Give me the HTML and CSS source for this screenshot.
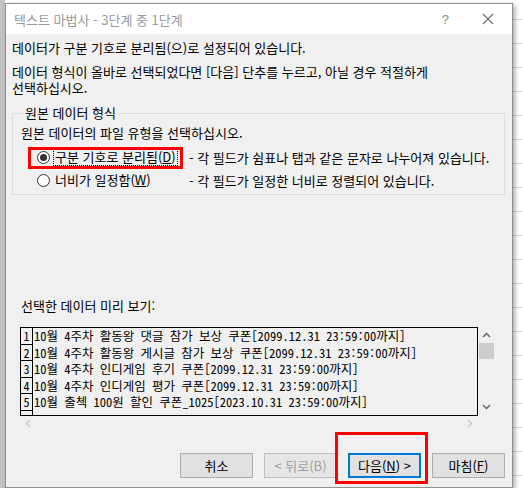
FILE: index.html
```html
<!DOCTYPE html>
<html lang="ko">
<head>
  <meta charset="UTF-8">
  <title>텍스트 마법사 - 3단계 중 1단계</title>
  <link rel="stylesheet" href="styles.css">
</head>
<body>

  <div class="wizard">
    <div class="titlebar">
      <span class="title">텍스트 마법사 - 3단계 중 1단계</span>
      <span class="help">?</span>
      <svg class="close" width="12" height="12" viewBox="0 0 12 12">
        <path d="M1 1 L11 11 M11 1 L1 11" stroke="#707070" stroke-width="1.1" fill="none"/>
      </svg>
    </div>

    <div class="content">
      <p class="intro">데이터가 구분 기호로 분리됨(으)로 설정되어 있습니다.</p>
      <p class="intro">데이터 형식이 올바로 선택되었다면 [다음] 단추를 누르고, 아닐 경우 적절하게<br>선택하십시오.</p>

      <fieldset class="group">
        <legend>원본 데이터 형식</legend>
        <div class="hint">원본 데이터의 파일 유형을 선택하십시오.</div>

        <div class="option">
          <div class="opt-main">
            <span class="radio checked"></span>
            <span class="opt-label focus">구분 기호로 분리됨(<u>D</u>)</span>
          </div>
          <span class="opt-desc">- 각 필드가 쉼표나 탭과 같은 문자로 나누어져 있습니다.</span>
          <span class="mark mark-option"></span>
        </div>

        <div class="option">
          <div class="opt-main">
            <span class="radio"></span>
            <span class="opt-label">너비가 일정함(<u>W</u>)</span>
          </div>
          <span class="opt-desc">- 각 필드가 일정한 너비로 정렬되어 있습니다.</span>
        </div>
      </fieldset>

      <div class="preview-label">선택한 데이터 미리 보기:</div>

      <div class="preview">
        <div class="sheet">
          <div class="row"><span class="num">1</span><span class="cell">10월 4주차 활동왕 댓글 참가 보상 쿠폰[2099.12.31 23:59:00까지]</span></div>
          <div class="row"><span class="num">2</span><span class="cell">10월 4주차 활동왕 게시글 참가 보상 쿠폰[2099.12.31 23:59:00까지]</span></div>
          <div class="row"><span class="num">3</span><span class="cell">10월 4주차 인디게임 후기 쿠폰[2099.12.31 23:59:00까지]</span></div>
          <div class="row"><span class="num">4</span><span class="cell">10월 4주차 인디게임 평가 쿠폰[2099.12.31 23:59:00까지]</span></div>
          <div class="row"><span class="num">5</span><span class="cell">10월 출첵 100원 할인 쿠폰_1025[2023.10.31 23:59:00까지]</span></div>
          <div class="row"><span class="num"></span><span class="cell"></span></div>
        </div>
        <div class="vscroll">
          <svg class="arrow" width="9" height="6" viewBox="0 0 9 6"><path d="M1 5 L4.5 1.5 L8 5" stroke="#606060" stroke-width="1.4" fill="none"/></svg>
          <div class="thumb"></div>
          <svg class="arrow arrow-down" width="9" height="6" viewBox="0 0 9 6"><path d="M1 1 L4.5 4.5 L8 1" stroke="#606060" stroke-width="1.4" fill="none"/></svg>
        </div>
      </div>

      <div class="hscroll">
        <svg width="6" height="9" viewBox="0 0 6 9"><path d="M5 1 L1.5 4.5 L5 8" stroke="#c8c8c8" stroke-width="1.4" fill="none"/></svg>
        <svg width="6" height="9" viewBox="0 0 6 9"><path d="M1 1 L4.5 4.5 L1 8" stroke="#c8c8c8" stroke-width="1.4" fill="none"/></svg>
      </div>

      <div class="buttons">
        <button class="btn">취소</button>
        <button class="btn" disabled>&lt; 뒤로(B)</button>
        <button class="btn btn-default">다음(<u>N</u>) &gt;<span class="mark mark-next"></span></button>
        <button class="btn">마침(<u>F</u>)</button>
      </div>
    </div>
  </div>

</body>
</html>
```

FILE: styles.css
```css
body {
  margin: 0;
  width: 522px;
  height: 488px;
  overflow: hidden;
  font-family: "Noto Sans CJK KR", "Noto Sans", sans-serif;
  font-size: 13px;
  color: #000;
  background:
    linear-gradient(to right, #c4c4c4 0, #c4c4c4 5px, transparent 5px),
    repeating-linear-gradient(to bottom, transparent 0, transparent 19px, #dadada 19px, #dadada 20px, transparent 20px, transparent 24px),
    #fff;
  padding: 3px 0 0 5px;
  box-sizing: border-box;
}

.wizard {
  width: 506px;
  border: 1px solid #8f8f8f;
  background: #f0f0f0;
  box-shadow: 2px 2px 5px rgba(0, 0, 0, 0.35);
}

.titlebar {
  display: flex;
  align-items: center;
  height: 30px;
  background: #fff;
  padding-left: 8px;
}

.title {
  flex: 1;
  color: #9a9a9a;
}

.help {
  color: #8a8a8a;
  font-family: "Liberation Sans", sans-serif;
  font-size: 13px;
  margin-right: 33px;
}

.close {
  margin-right: 18px;
}

.content {
  padding: 6px 7px 9px 6px;
}

.intro {
  margin: 0 0 8px;
  line-height: 16px;
}

.group {
  margin: 9px 0 0;
  padding: 4px 8px 2px 8px;
  border: 1px solid #dcdcdc;
  min-inline-size: 0;
}

.group legend {
  padding: 0 2px;
  margin-left: 2px;
  line-height: 16px;
}

.hint {
  line-height: 16px;
  margin-bottom: 5px;
}

.option {
  position: relative;
  display: grid;
  grid-template-columns: 168px 1fr;
  align-items: center;
  height: 22px;
  margin-bottom: 1px;
  white-space: nowrap;
}

.opt-main {
  display: flex;
  align-items: center;
  padding-left: 16px;
}

.radio {
  width: 11px;
  height: 11px;
  border: 1px solid #333;
  border-radius: 50%;
  background: #fff;
  display: flex;
  align-items: center;
  justify-content: center;
}

.radio.checked::after {
  content: "";
  width: 7px;
  height: 7px;
  border-radius: 50%;
  background: #333;
}

.opt-label {
  margin-left: 3px;
  padding: 0 1px;
  line-height: 16px;
  border: 1px solid transparent;
}

.opt-label.focus {
  border: 1px dotted #000;
}

.mark {
  position: absolute;
  border: 3px solid #ff0000;
  pointer-events: none;
}

.mark-option {
  left: 7px;
  top: 1px;
  width: 149px;
  height: 16px;
}

.preview-label {
  margin-top: 103px;
  margin-left: 9px;
  line-height: 16px;
}

.preview {
  display: flex;
  margin: 13px 0 0 8px;
}

.sheet {
  width: 456px;
  height: 87px;
  border: 1px solid #000;
  background: #f0f0f0;
  overflow: hidden;
  font-family: "Noto Sans Mono CJK KR", "Liberation Mono", "Noto Sans CJK KR", monospace;
  font-size: 12.5px;
}

.row {
  display: flex;
  height: 16.6px;
  line-height: 16px;
}

.num {
  width: 11px;
  flex: none;
  overflow: hidden;
  border-right: 1px solid #000;
  border-bottom: 1px solid #000;
  text-align: center;
  font-size: 12px;
}

.cell {
  padding-left: 1px;
  white-space: nowrap;
}

.vscroll {
  width: 17px;
  display: flex;
  flex-direction: column;
  align-items: center;
}

.arrow {
  margin-top: 5px;
}

.thumb {
  width: 15px;
  height: 16px;
  margin-top: 5px;
  background: #cdcdcd;
}

.arrow-down {
  margin-top: auto;
  margin-bottom: 6px;
}

.hscroll {
  display: flex;
  justify-content: space-between;
  align-items: center;
  width: 448px;
  height: 14px;
  margin-left: 13px;
}

.buttons {
  display: flex;
  justify-content: flex-end;
  gap: 11px;
  margin-top: 23px;
}

.btn {
  position: relative;
  width: 73px;
  height: 25px;
  border: 1px solid #adadad;
  background: #e1e1e1;
  font-family: "Noto Sans CJK KR", sans-serif;
  font-size: 13px;
  color: #000;
  padding: 0;
}

.btn:disabled {
  color: #a0a0a0;
  border-color: #bfbfbf;
  background: #e6e6e6;
}

.btn-default {
  border: 2px solid #0078d7;
}

.mark-next {
  left: -15px;
  top: -23px;
  width: 87px;
  height: 46px;
}
```
